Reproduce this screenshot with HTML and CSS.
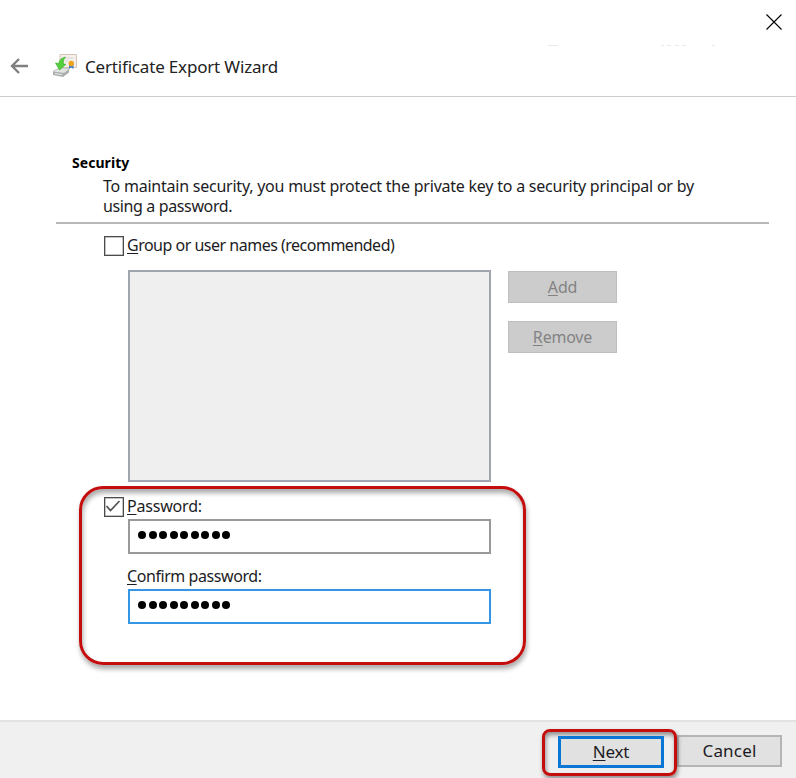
FILE: index.html
```html
<!DOCTYPE html>
<html lang="en">
<head>
<meta charset="utf-8">
<title>Certificate Export Wizard</title>
<link rel="stylesheet" href="styles.css">
</head>
<body>
<main class="wizard">
  <div class="titlebar">
    <svg class="close" width="16" height="16" viewBox="0 0 16 16"><path d="M.5.5l15 15M15.5.5l-15 15"/></svg>
  </div>
  <header class="header">
    <svg class="remnant" width="170" height="2" viewBox="0 0 170 2"><path d="M0 .5h10M113 .5h3M119 .5h4M127 .5h4M134 .5h4M164 .5h3"/></svg>
    <svg class="back" width="19" height="18" viewBox="0 0 19 18"><path d="M9 2L2 9l7 7M2 9h16"/></svg>
    <svg class="cert" width="26" height="26" viewBox="0 0 26 26">
      <path class="paper" d="M8 1.500h16.500v13H8z"/>
      <path class="paper-edge" d="M11 5h10M13 8h4"/>
      <path class="ribbon" d="M17 11v5l2-1.500 2.500 1.500v-5z"/>
      <circle class="seal" cx="19.300" cy="10.500" r="2.700"/>
      <path class="drive-top" d="M1.500 18l6-3 10 .5-4 5-12-.5z"/>
      <path class="drive-front" d="M1 18.500l11 1.500 5-4v3.500l-6 4.500-10-2z"/>
      <path class="drive-slot" d="M3 20.700l7 .8"/>
      <path class="arrow" d="M9.500 5.500l4-1.500c-2 2.500-2.500 4.500-2 7l2.500.3L7.500 17 3.500 10l3.300.5C7 8.500 8 7 9.500 5.500z"/>
    </svg>
    <h1 class="title">Certificate Export Wizard</h1>
  </header>

  <section class="content">
    <div class="intro">
      <h2 class="heading">Security</h2>
      <p class="text"><span class="line1">To maintain security, you must protect the private key to a security principal or by</span><br><span class="line2">using a password.</span></p>
    </div>
    <div class="check-row group-row"><span class="box"></span><span class="group-label"><u>G</u>roup or user names (recommended)</span></div>
    <div class="names">
      <div class="list"></div>
      <div class="actions">
        <button class="action" disabled><span class="add"><u>A</u>dd</span></button>
        <button class="action" disabled><span class="remove"><u>R</u>emove</span></button>
      </div>
    </div>
    <div class="password">
      <div class="check-row">
        <span class="box"><svg width="16" height="16" viewBox="0 0 16 16"><path d="M1.500 8l4 4.500L14.500 3"/></svg></span>
        <span class="password-label"><u>P</u>assword:</span>
      </div>
      <div class="field"><i></i><i></i><i></i><i></i><i></i><i></i><i></i><i></i><i></i></div>
      <div class="confirm"><span class="confirm-label"><u>C</u>onfirm password:</span></div>
      <div class="field focused"><i></i><i></i><i></i><i></i><i></i><i></i><i></i><i></i><i></i></div>
    </div>
  </section>

  <footer class="footer">
    <div class="highlight"><button class="button primary"><span class="next"><u>N</u>ext</span></button></div>
    <button class="button"><span class="cancel">Cancel</span></button>
  </footer>
</main>
</body>
</html>
```
FILE: styles.css
```css
* { box-sizing: border-box; }
body { margin: 0; background: #fff; color: #1c1c24; font: 16px/20px "Noto Sans", "Open Sans", sans-serif; }
.wizard { width: 796px; height: 778px; display: flex; flex-direction: column; overflow: hidden; }
svg { display: block; fill: none; }
button { font: inherit; padding: 0; color: inherit; border-radius: 0; }
span { white-space: nowrap; }
u { text-decoration-thickness: 1px; text-underline-offset: 2px; text-decoration-skip-ink: none; }

.titlebar { height: 44px; display: flex; justify-content: flex-end; padding: 14px 14px 0 0; }
.close { stroke: #000; stroke-width: 1.1; }
.header { height: 53px; position: relative; display: flex; align-items: flex-start; border-bottom: 1px solid #ccc; padding-left: 10px; }
.remnant { position: absolute; left: 548px; top: 1px; stroke: #e9e9e9; }
.back { margin-top: 13px; stroke: #808080; stroke-width: 2.4; }
.cert { margin: 9px 0 0 23px; }
.title { margin: 11px 0 0 7px; font-size: 17px; line-height: 24px; font-weight: 400; color: #222; white-space: nowrap; letter-spacing: -0.18px; }
.paper { fill: #f4efea; stroke: #d8c5b8; }
.paper-edge { stroke: #ded7d0; }
.ribbon { fill: #477cc5; }
.seal { fill: #eda51b; }
.drive-top { fill: #e2e3e3; stroke: #aaa; stroke-width: .6; }
.drive-front { fill: #aaaead; }
.drive-slot { stroke: #eee; }
.arrow { fill: #55d13e; stroke: #38a82c; stroke-width: .6; }

.content { flex: none; height: 623px; padding-top: 56px; }
.intro { margin: 0 27px 0 56px; height: 71px; border-bottom: 2px solid #b8b8b8; }
.heading { margin: 0 0 0 16px; font-size: 14px; line-height: 20px; letter-spacing: 0.05px; color: #000; }
.text { margin: 3px 0 0 47px; line-height: 20px; }
.line1 { letter-spacing: -0.23px; }
.line2 { letter-spacing: -0.37px; }
.group-label { letter-spacing: -0.5px; }
.password-label { letter-spacing: -0.2px; }
.confirm-label { letter-spacing: -0.43px; }
.remove, .add { letter-spacing: -0.2px; }
.next { letter-spacing: -0.2px; }
.cancel { letter-spacing: 0.2px; }
.check-row { display: flex; height: 20px; line-height: 19px; gap: 3px; }
.group-row { margin: 12px 0 0 104px; }
.box { width: 20px; height: 20px; border: 1.500px solid #4c4c4c; outline: 0; background: #fff; box-shadow: inset 0 0 0 .5px #888; }
.box svg { stroke: #555; stroke-width: 1.8; }
.names { display: flex; gap: 17px; margin: 14px 0 0 128px; }
.list { width: 363px; height: 212px; background: #efefef; border: 2px solid #a1a5ae; }
.actions { display: grid; grid-auto-rows: 32px; gap: 18px; padding-top: 1px; align-content: start; }
.action { width: 109px; border: 1px solid #bfbfbf; background: #ccc; color: #838383; }
.password { width: 447px; height: 179px; margin: 4px 0 0 79px; border: 3px solid #c40e0e; border-radius: 24px; padding: 8px 0 0 22px; box-shadow: 1px 4px 5px #0005, inset 1px 4px 5px #0005; }
.field { width: 363px; height: 35px; margin: 2px 0 0 24px; border: 2px solid #999; background: #fff; padding: 10px 0 0 8px; display: flex; gap: 2.500px; }
.field i { width: 8px; height: 8px; border-radius: 50%; background: #000; }
.focused { border-color: #3596e5; margin-top: 3px; }
.confirm { margin: 12px 0 0 23px; height: 20px; line-height: 20px; }

.footer { flex: none; height: 58px; display: flex; background: #f0f0f0; border-top: 2px solid #e2e2e2; padding: 7px 0 0 542px; }
.highlight { width: 135px; height: 47px; border: 3px solid #c40e0e; border-radius: 8px; padding: 4px 0 0 13px; box-shadow: 1px 3px 4px #0006, inset 1px 3px 4px #0006; position: relative; }
.button { width: 105px; height: 32px; margin-top: 6px; border: 2px solid #b5b5b5; background: #e1e1e1; font-size: 17px; }
.primary { display: block; width: 106px; margin: 0; border: 3px solid #0877d5; }
```
